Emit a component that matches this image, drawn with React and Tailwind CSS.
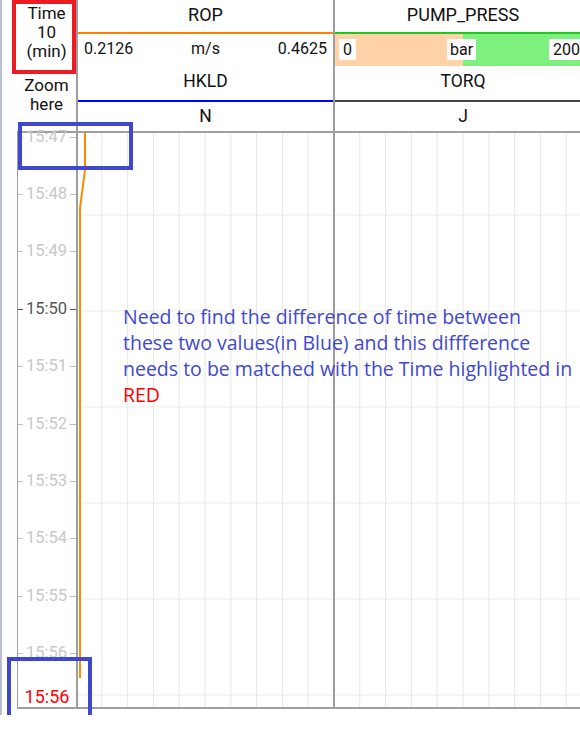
import React from 'react';

const ticks = ['15:47', '15:48', '15:49', '15:50', '15:51', '15:52', '15:53', '15:54', '15:55', '15:56'];

function Column({ title, titleLine, values, sub, subLine, unit, last }) {
  return (
    <div className={`shrink-0 flex flex-col ${last ? 'w-[256px]' : 'w-[257px] border-r-2 border-[#9e9e9e]'}`}>
      <div className="h-[32px] pb-[4px] flex items-center justify-center text-[18px] text-[#111]">{title}</div>
      <div className={`h-[2px] ${titleLine}`} />
      {values}
      <div className="h-[34px] pb-[3px] flex items-center justify-center text-[17.5px] text-[#111]">{sub}</div>
      <div className={`h-[2px] ${subLine}`} />
      <div className="h-[29px] flex items-center justify-center text-[17.5px] text-[#111]">{unit}</div>
    </div>
  );
}

function Plot() {
  const verticals = [];
  for (let k = 1; k <= 20; k++) {
    if (k === 10) continue;
    verticals.push(77 + 25.8 * k - 79);
  }
  const horizontals = [82, 178, 274, 370, 466, 562];
  return (
    <svg width="520" height="574" className="block">
      {verticals.map((x) => (
        <line key={x} x1={x} y1="0" x2={x} y2="574" stroke="#e6e6e6" strokeWidth="1" />
      ))}
      {horizontals.map((y) => (
        <line key={y} x1="0" y1={y} x2="520" y2={y} stroke="#ececec" strokeWidth="1" />
      ))}
      <line x1="256" y1="0" x2="256" y2="574" stroke="#9e9e9e" strokeWidth="2" />
      <path d="M7 0 L7 37 L2 75 L2 545" fill="none" stroke="#ff8a00" strokeWidth="2" />
    </svg>
  );
}

export default function App() {
  return (
    <div className="relative w-[580px] h-[741px] overflow-hidden bg-white font-['Roboto',sans-serif]">
      <div className="flex h-[715px]">
        {/* left gutter */}
        <div className="w-[17px] shrink-0 border-l-2 border-[#b8c0ce]" />

        <div className="flex flex-col w-[600px] shrink-0">
          {/* header */}
          <div className="flex h-[133px] border-b-2 border-[#9e9e9e]">
            <div className="w-[61px] shrink-0 border-r-2 border-[#9e9e9e] flex flex-col items-center text-[17px] leading-[19px] text-[#111]">
              <div className="pt-[4px] text-center">Time<br />10<br />(min)</div>
              <div className="pt-[15px] text-center">Zoom<br />here</div>
            </div>
            <Column
              title="ROP"
              titleLine="bg-[#ff8000]"
              values={
                <div className="h-[32px] pb-[2px] flex items-center justify-between px-[6px] text-[16px] text-[#111]">
                  <span>0.2126</span>
                  <span>m/s</span>
                  <span>0.4625</span>
                </div>
              }
              sub="HKLD"
              subLine="bg-[#0000ff]"
              unit="N"
            />
            <Column
              last
              title="PUMP_PRESS"
              titleLine="bg-[#1fc81f]"
              values={
                <div className="h-[32px] pb-[2px] flex items-center text-[16px] text-[#111] bg-[linear-gradient(to_right,#ffd2a8_0,#ffd2a8_128px,#7df07d_128px)]">
                  <span className="ml-[4px] bg-white px-[4px] leading-[21px]">0</span>
                  <span className="ml-[91px] bg-white px-[3px] leading-[21px]">bar</span>
                  <span className="ml-[73px] bg-white px-[4px] leading-[21px]">200</span>
                </div>
              }
              sub="TORQ"
              subLine="bg-[#454545]"
              unit="J"
            />
          </div>

          {/* chart */}
          <div className="flex h-[576px] border-b-2 border-[#9e9e9e]">
            <div className="relative w-[61px] shrink-0 border-l border-r-2 border-[#9e9e9e]">
              {ticks.map((t, i) => {
                const dark = t === '15:50';
                return (
                  <div
                    key={t}
                    className="absolute left-0 right-0 flex items-center h-[20px]"
                    style={{ top: 4 + i * 57.4 - 10 }}
                  >
                    <div className={`w-[5px] h-px ${dark ? 'bg-[#555]' : 'bg-[#bdbdbd]'}`} />
                    <span className={`flex-1 text-center text-[16.5px] ${dark ? 'text-[#555]' : 'text-[#c8c8c8]'}`}>{t}</span>
                    <div className={`w-[6px] h-px ${dark ? 'bg-[#555]' : 'bg-[#bdbdbd]'}`} />
                  </div>
                );
              })}
              <div className="absolute left-0 right-0 bottom-0 text-center text-[18px] leading-[20px] text-[#ff0000]">15:56</div>
            </div>
            <div className="overflow-hidden">
              <Plot />
            </div>
          </div>
        </div>
      </div>

      {/* annotations */}
      <div className="absolute left-[12px] top-0 w-[64px] h-[74px] border-[4px] border-[#ec1c24]" />
      <div className="absolute left-[18px] top-[122px] w-[115px] h-[48px] border-[4px] border-[#3f48cc]" />
      <div className="absolute left-[7px] top-[657px] w-[85px] h-[58px] border-[4px] border-b-0 border-[#3f48cc]" />
      <div className="absolute left-[123px] top-[304px] text-[19.5px] leading-[26px] text-[#3f48cc] font-['Open_Sans',sans-serif] whitespace-nowrap">
        <div>Need to find the difference of time between</div>
        <div>these two values(in Blue) and this diffference</div>
        <div>needs to be matched with the Time highlighted in</div>
        <div className="text-[#ff0000]">RED</div>
      </div>
    </div>
  );
}
